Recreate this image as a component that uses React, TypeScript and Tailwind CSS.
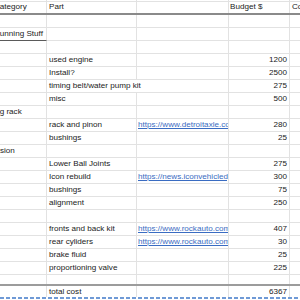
import React from "react";

type RowData = {
  a?: string;
  aShift?: number;
  aDark?: boolean;
  b?: string;
  c?: string;
  d?: string;
  span?: boolean;
};

const rows: RowData[] = [
  {},
  { a: "Running Stuff", aShift: -6, aDark: true },
  {},
  { b: "used engine", d: "1200" },
  { b: "Install?", d: "2500" },
  { b: "timing belt/water pump kit", d: "275", span: true },
  { b: "misc", d: "500" },
  { a: "Steering rack", aShift: -26 },
  { b: "rack and pinon", c: "https://www.detroitaxle.com/rack-and-pinion", d: "280" },
  { b: "bushings", d: "25" },
  { a: "Suspension", aShift: -27.5 },
  { b: "Lower Ball Joints", d: "275" },
  { b: "Icon rebuild", c: "https://news.iconvehicledynamics.com/rebuild", d: "300" },
  { b: "bushings", d: "75" },
  { b: "alignment", d: "250" },
  {},
  { b: "fronts and back kit", c: "https://www.rockauto.com/en/catalog", d: "407" },
  { b: "rear cyliders", c: "https://www.rockauto.com/en/catalog", d: "30" },
  { b: "brake fluid", d: "25" },
  { b: "proportioning valve", d: "225" },
];

const cell = "shrink-0 h-full overflow-hidden whitespace-nowrap border-r border-b border-[#e2e2e2]";

function Row({ r }: { r: RowData }) {
  return (
    <div className="flex h-[13px] leading-[12px]">
      <div className={`${cell} w-[47px] ${r.aDark ? "border-b-[#5a5a5a]" : ""}`}>
        {r.a && (
          <span className="block" style={{ marginLeft: r.aShift }}>
            {r.a}
          </span>
        )}
      </div>
      {r.span ? (
        <div className={`${cell} w-[182px] pl-[2px]`}>{r.b}</div>
      ) : (
        <>
          <div className={`${cell} w-[90px] pl-[2px]`}>{r.b}</div>
          <div className={`${cell} w-[92px] pl-[1px]`}>
            {r.c && <span className="text-[#3a6cc2] underline">{r.c}</span>}
          </div>
        </>
      )}
      <div className={`${cell} w-[61px] pr-[2px] text-right`}>{r.d}</div>
      <div className={`${cell} flex-1 border-r-0`}></div>
    </div>
  );
}

export default function App() {
  return (
    <div className="w-[300px] h-[300px] overflow-hidden bg-white text-[#222] text-[8.1px] font-['Liberation_Sans',Arial,sans-serif]">
      {/* stub of the row above */}
      <div className="flex h-[2px]">
        <div className={`${cell} w-[47px]`}></div>
        <div className={`${cell} w-[90px]`}></div>
        <div className={`${cell} w-[92px]`}></div>
        <div className={`${cell} w-[61px]`}></div>
        <div className={`${cell} flex-1 border-r-0`}></div>
      </div>
      {/* header */}
      <div className="flex h-[13px] leading-[9px] border-b-2 border-[#8a8a8a]">
        <div className="shrink-0 h-full overflow-hidden whitespace-nowrap border-r border-[#e2e2e2] w-[47px]">
          <span className="block ml-[-6px]">Category</span>
        </div>
        <div className="shrink-0 h-full overflow-hidden whitespace-nowrap border-r border-[#e2e2e2] w-[90px] pl-[2px]">Part</div>
        <div className="shrink-0 h-full overflow-hidden whitespace-nowrap border-r border-[#e2e2e2] w-[92px]"></div>
        <div className="shrink-0 h-full overflow-hidden whitespace-nowrap border-r border-[#e2e2e2] w-[61px] pl-[1px]">Budget $</div>
        <div className="h-full overflow-hidden whitespace-nowrap flex-1 pl-[2px]">Cost</div>
      </div>
      {rows.map((r, i) => (
        <Row key={i} r={r} />
      ))}
      {/* blank row before total */}
      <div className="flex h-[11px] border-b-2 border-[#9c9c9c]">
        <div className="shrink-0 h-full border-r border-[#e2e2e2] w-[47px]"></div>
        <div className="shrink-0 h-full border-r border-[#e2e2e2] w-[90px]"></div>
        <div className="shrink-0 h-full border-r border-[#e2e2e2] w-[92px]"></div>
        <div className="shrink-0 h-full border-r border-[#e2e2e2] w-[61px]"></div>
        <div className="h-full flex-1"></div>
      </div>
      {/* total */}
      <div className="flex h-[11px] leading-[11px]">
        <div className="shrink-0 h-full border-r border-[#e2e2e2] w-[47px]"></div>
        <div className="shrink-0 h-full overflow-hidden whitespace-nowrap border-r border-[#e2e2e2] w-[90px] pl-[2px]">total cost</div>
        <div className="shrink-0 h-full border-r border-[#e2e2e2] w-[92px]"></div>
        <div className="shrink-0 h-full overflow-hidden whitespace-nowrap border-r border-[#e2e2e2] w-[61px] pr-[2px] text-right">6367</div>
        <div className="h-full flex-1"></div>
      </div>
      <div className="h-[2px] bg-[repeating-linear-gradient(90deg,#6f9ad6_0_4px,transparent_4px_6px)]"></div>
    </div>
  );
}
